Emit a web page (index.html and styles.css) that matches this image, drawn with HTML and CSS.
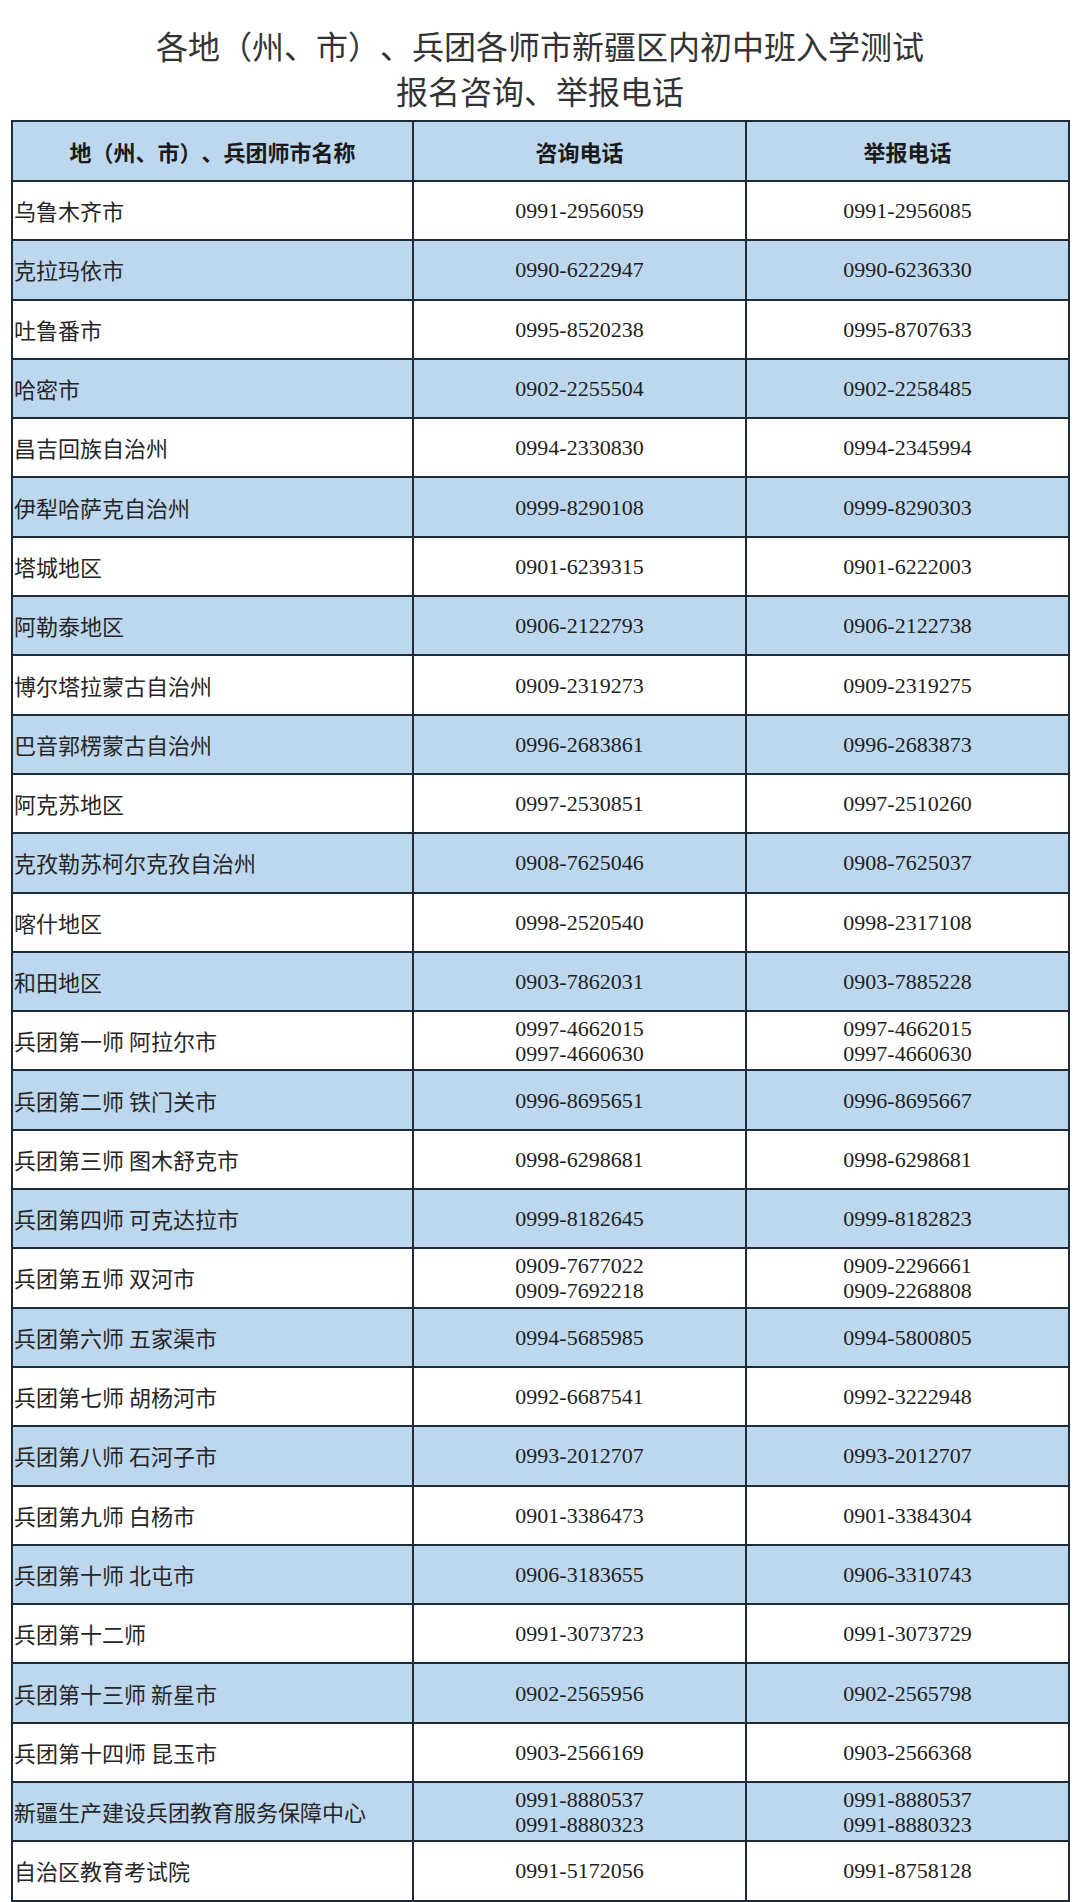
FILE: index.html
```html
<!DOCTYPE html>
<html lang="zh-CN">
<head>
<meta charset="utf-8">
<title>报名咨询、举报电话</title>
<link rel="stylesheet" href="styles.css">
</head>
<body>
<div class="page">
  <h1 class="title">各地（州、市）、兵团各师市新疆区内初中班入学测试<br>报名咨询、举报电话</h1>
  <table class="phones">
    <colgroup><col class="c1"><col class="c2"><col class="c3"></colgroup>
    <thead>
      <tr><th>地（州、市）、兵团师市名称</th><th>咨询电话</th><th>举报电话</th></tr>
    </thead>
    <tbody>
      <tr><td class="name">乌鲁木齐市</td><td>0991-2956059</td><td>0991-2956085</td></tr>
      <tr><td class="name">克拉玛依市</td><td>0990-6222947</td><td>0990-6236330</td></tr>
      <tr><td class="name">吐鲁番市</td><td>0995-8520238</td><td>0995-8707633</td></tr>
      <tr><td class="name">哈密市</td><td>0902-2255504</td><td>0902-2258485</td></tr>
      <tr><td class="name">昌吉回族自治州</td><td>0994-2330830</td><td>0994-2345994</td></tr>
      <tr><td class="name">伊犁哈萨克自治州</td><td>0999-8290108</td><td>0999-8290303</td></tr>
      <tr><td class="name">塔城地区</td><td>0901-6239315</td><td>0901-6222003</td></tr>
      <tr><td class="name">阿勒泰地区</td><td>0906-2122793</td><td>0906-2122738</td></tr>
      <tr><td class="name">博尔塔拉蒙古自治州</td><td>0909-2319273</td><td>0909-2319275</td></tr>
      <tr><td class="name">巴音郭楞蒙古自治州</td><td>0996-2683861</td><td>0996-2683873</td></tr>
      <tr><td class="name">阿克苏地区</td><td>0997-2530851</td><td>0997-2510260</td></tr>
      <tr><td class="name">克孜勒苏柯尔克孜自治州</td><td>0908-7625046</td><td>0908-7625037</td></tr>
      <tr><td class="name">喀什地区</td><td>0998-2520540</td><td>0998-2317108</td></tr>
      <tr><td class="name">和田地区</td><td>0903-7862031</td><td>0903-7885228</td></tr>
      <tr><td class="name">兵团第一师 阿拉尔市</td><td>0997-4662015<br>0997-4660630</td><td>0997-4662015<br>0997-4660630</td></tr>
      <tr><td class="name">兵团第二师 铁门关市</td><td>0996-8695651</td><td>0996-8695667</td></tr>
      <tr><td class="name">兵团第三师 图木舒克市</td><td>0998-6298681</td><td>0998-6298681</td></tr>
      <tr><td class="name">兵团第四师 可克达拉市</td><td>0999-8182645</td><td>0999-8182823</td></tr>
      <tr><td class="name">兵团第五师 双河市</td><td>0909-7677022<br>0909-7692218</td><td>0909-2296661<br>0909-2268808</td></tr>
      <tr><td class="name">兵团第六师 五家渠市</td><td>0994-5685985</td><td>0994-5800805</td></tr>
      <tr><td class="name">兵团第七师 胡杨河市</td><td>0992-6687541</td><td>0992-3222948</td></tr>
      <tr><td class="name">兵团第八师 石河子市</td><td>0993-2012707</td><td>0993-2012707</td></tr>
      <tr><td class="name">兵团第九师 白杨市</td><td>0901-3386473</td><td>0901-3384304</td></tr>
      <tr><td class="name">兵团第十师 北屯市</td><td>0906-3183655</td><td>0906-3310743</td></tr>
      <tr><td class="name">兵团第十二师</td><td>0991-3073723</td><td>0991-3073729</td></tr>
      <tr><td class="name">兵团第十三师 新星市</td><td>0902-2565956</td><td>0902-2565798</td></tr>
      <tr><td class="name">兵团第十四师 昆玉市</td><td>0903-2566169</td><td>0903-2566368</td></tr>
      <tr><td class="name">新疆生产建设兵团教育服务保障中心</td><td>0991-8880537<br>0991-8880323</td><td>0991-8880537<br>0991-8880323</td></tr>
      <tr><td class="name">自治区教育考试院</td><td>0991-5172056</td><td>0991-8758128</td></tr>
    </tbody>
  </table>
</div>
</body>
</html>
```

FILE: styles.css
```css
html, body {
  margin: 0;
  padding: 0;
  background: #ffffff;
  text-spacing-trim: space-all;
}

.page {
  width: 1080px;
  padding: 23px 0 0 11px;
  box-sizing: border-box;
}

.title {
  margin: 0 11px 7px 0;
  font-family: "Noto Sans CJK SC", "Noto Sans", sans-serif;
  font-weight: 400;
  font-size: 32px;
  line-height: 45px;
  color: #333333;
  text-align: center;
  text-spacing-trim: space-all;
}

.phones {
  border-collapse: collapse;
  table-layout: fixed;
  width: 1057px;
  color: #1e1e1e;
}

.c1 { width: 401px; }
.c2 { width: 333px; }
.c3 { width: 323px; }

.phones th,
.phones td {
  border: 2px solid #1f2b38;
  padding: 0;
  text-align: center;
  vertical-align: middle;
}

.phones th {
  height: 58px;
  background: #bdd7ee;
  font-family: "Noto Sans CJK SC", "Noto Sans", sans-serif;
  font-weight: 700;
  font-size: 22px;
  color: #1a1a1a;
  text-spacing-trim: space-all;
}

.phones td {
  height: 57.3px;
  font-family: "Liberation Serif", "Times New Roman", serif;
  font-size: 22px;
  line-height: 25px;
}

.phones td.name {
  text-align: left;
  padding-left: 1px;
  font-family: "Noto Sans CJK SC", "Noto Sans", sans-serif;
  color: #262626;
}

.phones tbody tr:nth-child(even) td {
  background: #bdd7ee;
}
```
